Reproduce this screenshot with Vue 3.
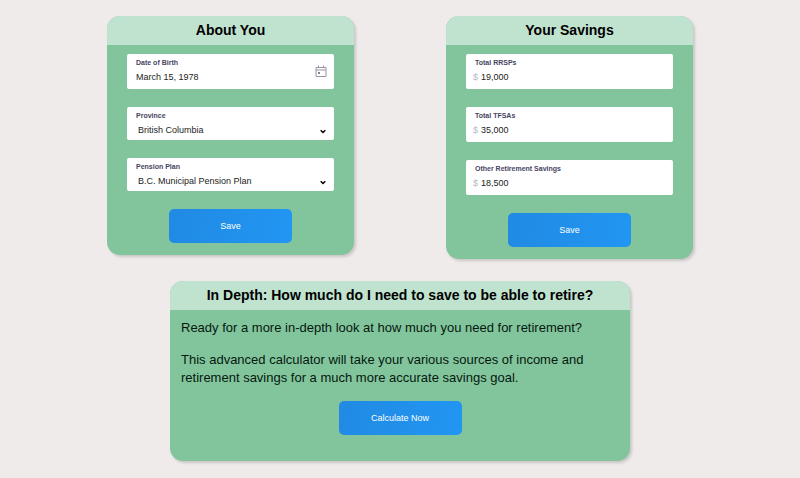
<script setup>
import { ref } from 'vue'

const birthDate = ref('March 15, 1978')

const selects = ref([
  {
    id: 'province',
    label: 'Province',
    value: 'British Columbia',
    options: ['British Columbia'],
  },
  {
    id: 'pension',
    label: 'Pension Plan',
    value: 'B.C. Municipal Pension Plan',
    options: ['B.C. Municipal Pension Plan'],
  },
])

const savings = ref([
  { id: 'rrsp', label: 'Total RRSPs', value: '19,000' },
  { id: 'tfsa', label: 'Total TFSAs', value: '35,000' },
  { id: 'other', label: 'Other Retirement Savings', value: '18,500' },
])
</script>

<template>
  <main class="page">
    <div class="columns">
      <section class="card">
        <h2 class="card-title">About You</h2>
        <form class="form" @submit.prevent>
          <div class="field">
            <label for="birth">Date of Birth</label>
            <input id="birth" v-model="birthDate" class="control" type="text" />
            <svg class="calendar" viewBox="0 0 12 13" aria-hidden="true">
              <path d="M1 2.5h10v9h-10zM1 5h10M3.500 .5v2M8.500 .5v2" />
              <rect x="3" y="7" width="2" height="2" />
            </svg>
          </div>
          <div v-for="s in selects" :key="s.id" class="field select-field">
            <label :for="s.id">{{ s.label }}</label>
            <select :id="s.id" v-model="s.value" class="control">
              <option v-for="o in s.options" :key="o">{{ o }}</option>
            </select>
            <svg class="chevron" viewBox="0 0 6 5" aria-hidden="true">
              <path d="M.7 1.200L3 3.500L5.300 1.200" />
            </svg>
          </div>
          <button class="button" type="submit">Save</button>
        </form>
      </section>

      <section class="card">
        <h2 class="card-title">Your Savings</h2>
        <form class="form" @submit.prevent>
          <div v-for="s in savings" :key="s.id" class="field">
            <label :for="s.id">{{ s.label }}</label>
            <div class="money">
              <span class="currency">$</span>
              <input :id="s.id" v-model="s.value" class="control" type="text" />
            </div>
          </div>
          <button class="button" type="submit">Save</button>
        </form>
      </section>
    </div>

    <section class="card wide">
      <h2 class="card-title">In Depth: How much do I need to save to be able to retire?</h2>
      <div class="copy">
        <p>Ready for a more in-depth look at how much you need for retirement?</p>
        <p>
          This advanced calculator will take your various sources of income and retirement
          savings for a much more accurate savings goal.
        </p>
        <button class="button" type="button">Calculate Now</button>
      </div>
    </section>
  </main>
</template>

<style>
body {
  margin: 0;
  background: #efebeb;
}
</style>

<style scoped>
.page {
  box-sizing: border-box;
  padding: 16px 20px;
  display: flex;
  flex-direction: column;
  align-items: center;
  gap: 22px;
  font-family: "Liberation Sans", Arial, sans-serif;
  color: #000;
}

.columns {
  width: 100%;
  max-width: 586px;
  display: flex;
  justify-content: space-between;
  align-items: flex-start;
  gap: 20px;
}

.card {
  box-sizing: border-box;
  flex: 0 1 247px;
  border-radius: 13px;
  background: #82c59d;
  box-shadow: 2px 2px 3px rgba(0, 0, 0, 0.16);
  overflow: hidden;
}

.card-title {
  margin: 0;
  background: #c0e3cf;
  font-size: 14px;
  line-height: 29px;
  font-weight: 700;
  text-align: center;
}

.form {
  padding: 9px 20px 12px;
  display: flex;
  flex-direction: column;
  gap: 18px;
}

.field {
  position: relative;
  box-sizing: border-box;
  height: 35px;
  padding: 4px 9px 0;
  border-radius: 2px;
  background: #fff;
}

.select-field {
  height: 33px;
}

label {
  display: block;
  font-size: 7px;
  line-height: 9px;
  font-weight: 700;
  color: #45455f;
}

.control {
  display: block;
  box-sizing: border-box;
  width: 100%;
  height: 14px;
  margin: 3px 0 0;
  padding: 0;
  border: 0;
  outline: 0;
  appearance: none;
  background: transparent;
  font-family: inherit;
  font-size: 9px;
  line-height: 14px;
  color: #222;
}

.select-field .control {
  padding-left: 2px;
}

.calendar {
  position: absolute;
  right: 7px;
  top: 11px;
  width: 12px;
  height: 13px;
  fill: none;
  stroke: #9696a2;
}

.calendar rect {
  fill: #85859a;
  stroke: none;
}

.chevron {
  position: absolute;
  right: 8px;
  bottom: 6px;
  width: 6px;
  height: 5px;
  fill: none;
  stroke: #000;
  stroke-width: 1.500;
}

.money {
  display: flex;
  gap: 3px;
  margin-left: -2px;
}

.currency {
  margin-top: 3px;
  font-size: 9px;
  line-height: 14px;
  color: #b4bac6;
}

.button {
  align-self: center;
  width: 123px;
  height: 34px;
  padding: 0;
  border: 0;
  border-radius: 5px;
  background: linear-gradient(100deg, #218ae3, #2196f3);
  font-family: inherit;
  font-size: 9px;
  color: #fff;
  cursor: pointer;
}

.wide {
  flex: none;
  width: 100%;
  max-width: 460px;
}

.copy {
  padding: 9px 11px 26px;
  display: flex;
  flex-direction: column;
  gap: 14px;
  font-size: 13px;
  line-height: 18px;
  color: #06180e;
}

.copy p {
  margin: 0;
}
</style>
